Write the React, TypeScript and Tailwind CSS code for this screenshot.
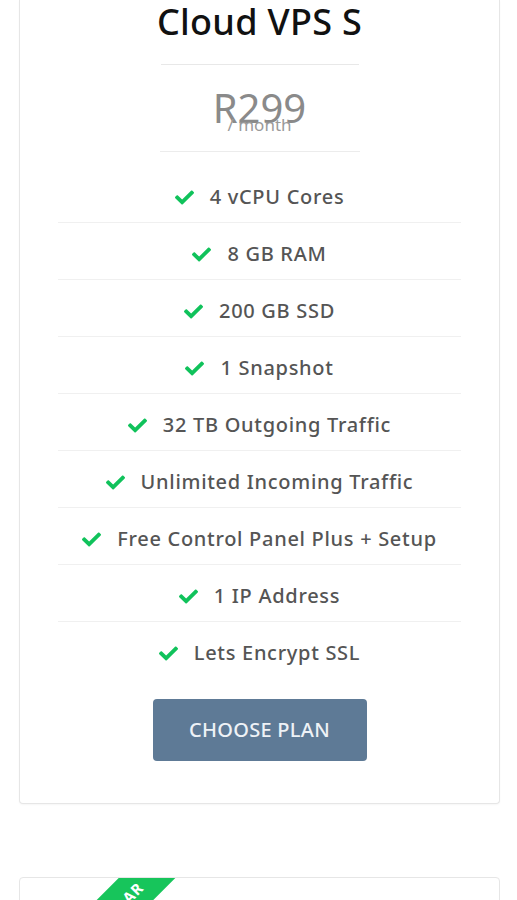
import { FaCheck } from "react-icons/fa";

const features = [
  "4 vCPU Cores",
  "8 GB RAM",
  "200 GB SSD",
  "1 Snapshot",
  "32 TB Outgoing Traffic",
  "Unlimited Incoming Traffic",
  "Free Control Panel Plus + Setup",
  "1 IP Address",
  "Lets Encrypt SSL",
];

const App = () => {
  return (
    <div
      className="h-[900px] overflow-hidden bg-white pl-[19px] pr-[17px]"
      style={{ fontFamily: '"Noto Sans", "Open Sans", sans-serif' }}
    >
      <div className="rounded-b-[4px] border border-t-0 border-[#e6e6e6] bg-white pb-[42px] shadow-[0_1px_2px_rgba(0,0,0,0.04)]">
        <h2 className="text-center text-[36px] font-medium leading-[44px] tracking-[0.3px] text-[#111]">
          Cloud VPS S
        </h2>
        <div className="mx-auto mt-[20px] h-px w-[198px] bg-[#e8e8e8]" />
        <div className="relative flex h-[86px] items-center justify-center">
          <span className="text-[40px] leading-none text-[#8a8a8a]">R299</span>
          <span className="absolute left-0 right-0 top-[51px] text-center text-[17px] leading-none text-[#9a9a9a]">
            / month
          </span>
        </div>
        <div className="mx-auto h-px w-[200px] bg-[#ececec]" />
        <ul className="mx-[38px] mt-[14px]">
          {features.map((f, i) => (
            <li
              key={f}
              className={
                "flex items-center justify-center gap-[16px] pt-[17px] pb-[11px] text-[20px] font-medium leading-[28px] tracking-[0.7px] text-[#555] " +
                (i < features.length - 1 ? "border-b border-[#f0f0f0]" : "border-b border-transparent")
              }
            >
              <FaCheck className="h-[19px] w-[19px] text-[#10c25b]" />
              <span>{f}</span>
            </li>
          ))}
        </ul>
        <div className="mt-[20px] flex justify-center">
          <button className="h-[62px] w-[214px] rounded-[4px] bg-[#5e7a96] text-[20px] font-medium tracking-[0.3px] text-[#eef2f6]">
            CHOOSE PLAN
          </button>
        </div>
      </div>

      <div className="relative mt-[73px] h-[300px] overflow-hidden rounded-[4px] border border-[#e6e6e6] bg-white">
        <div className="absolute left-[-7px] top-[14px] flex h-[40px] w-[200px] -rotate-45 items-center justify-center bg-[#17c55b] text-[15px] font-bold tracking-[1px] text-white">
          POPULAR
        </div>
      </div>
    </div>
  );
};

export default App;
